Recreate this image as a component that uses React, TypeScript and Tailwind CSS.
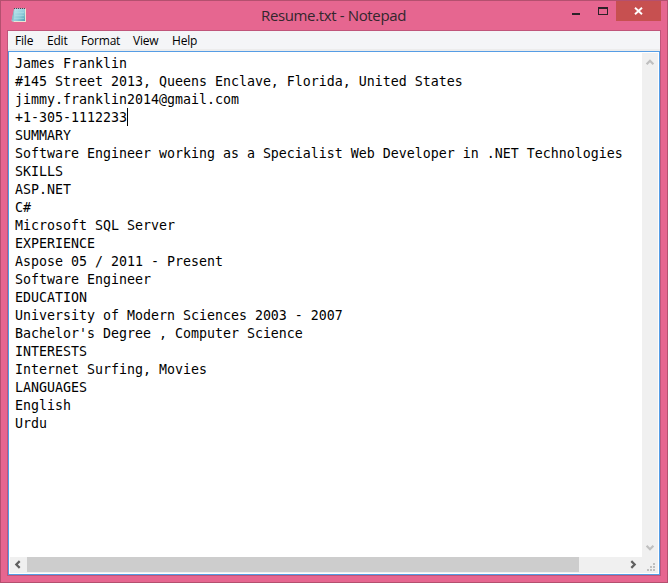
const lines = [
  'James Franklin',
  '#145 Street 2013, Queens Enclave, Florida, United States',
  'jimmy.franklin2014@gmail.com',
  '+1-305-1112233',
  'SUMMARY',
  'Software Engineer working as a Specialist Web Developer in .NET Technologies',
  'SKILLS',
  'ASP.NET',
  'C#',
  'Microsoft SQL Server',
  'EXPERIENCE',
  'Aspose 05 / 2011 - Present',
  'Software Engineer',
  'EDUCATION',
  'University of Modern Sciences 2003 - 2007',
  "Bachelor's Degree , Computer Science",
  'INTERESTS',
  'Internet Surfing, Movies',
  'LANGUAGES',
  'English',
  'Urdu',
];
const caretLine = 3;

function NotepadIcon() {
  return (
    <svg width="16" height="16" viewBox="0 0 16 16" className="shrink-0">
      <defs>
        <linearGradient id="page" x1="0" y1="0" x2="1" y2="1">
          <stop offset="0" stopColor="#c3e9f1" />
          <stop offset="0.6" stopColor="#8fcbd9" />
          <stop offset="1" stopColor="#4f9fb3" />
        </linearGradient>
      </defs>
      <path d="M3 2.5L0.5 14l2 1H15V2.5z" fill="#b3cdd3" />
      <path d="M3 2L0.7 13.5h3V2z" fill="#86b9c6" />
      <path d="M3.5 1.5H14V14H2.3z" fill="url(#page)" />
      <path d="M14 1.5h1V15H3v-1h11z" fill="#efe3d2" />
      <path d="M3 1.5H15" stroke="#3f5158" strokeWidth="1" strokeDasharray="1 1" />
      <path d="M4 5.5h9M4 8.5h9M3 11.5h10" stroke="#b4e0e8" strokeWidth="0.5" />
    </svg>
  );
}

type Direction = 'up' | 'down' | 'left' | 'right';

const arrows: Record<Direction, string> = {
  up: 'M0.6 6.2L4 2.8L7.4 6.2',
  down: 'M0.6 1.8L4 5.2L7.4 1.8',
  left: 'M5.7 0.1L2.3 3.5L5.7 6.9',
  right: 'M2.3 0.1L5.7 3.5L2.3 6.9',
};

function Arrow({ direction, color }: { direction: Direction; color: string }) {
  return (
    <svg width="8" height="8" viewBox="0 0 8 8" className="overflow-visible">
      <path d={arrows[direction]} fill="none" stroke={color} strokeWidth="2.2" />
    </svg>
  );
}

function TitleBar() {
  return (
    <div className="flex h-[29px] shrink-0">
      <div className="flex w-[164px] pt-[6px] pl-[10px]">
        <NotepadIcon />
      </div>
      <div className="flex-1 pt-[4px] pl-[96px] font-['Open_Sans',sans-serif] text-[15px] leading-[20px] tracking-[-0.36px] whitespace-nowrap text-[#33272d]">
        Resume.txt - Notepad
      </div>
      <div className="flex shrink-0 pr-[6px]">
        <svg width="54" height="20" viewBox="0 0 54 20" shapeRendering="crispEdges">
          <path d="M10 12h8v2h-8z" fill="#2b2228" />
          <path d="M36 6h10v8H36zM37 8v5h8V8z" fill="#2b2228" fillRule="evenodd" />
        </svg>
        <div className="flex h-[20px] w-[45px] items-center justify-center bg-[#c75050]">
          <svg width="9" height="8" viewBox="0 0 9 8">
            <path d="M1 0.8L8 7.2M8 0.8L1 7.2" stroke="#fff" strokeWidth="1.9" />
          </svg>
        </div>
      </div>
    </div>
  );
}

function MenuBar() {
  return (
    <div className="flex h-[20px] shrink-0 border-b-2 border-[#ececec] bg-[#f4f5f7] pl-[7px] font-['Open_Sans',sans-serif] text-[12px] leading-[20px] tracking-[-0.2px] text-black">
      <span className="w-[32px]">File</span>
      <span className="w-[34px]">Edit</span>
      <span className="w-[52px]">Format</span>
      <span className="w-[39px]">View</span>
      <span>Help</span>
    </div>
  );
}

function Editor() {
  return (
    <div className="flex flex-1 flex-col border border-[#569de5] bg-white p-px">
      <div className="flex flex-1">
        <div className="flex-1 pt-[2px] pl-[5px] font-['DejaVu_Sans_Mono',monospace] text-[13.29px] leading-[18px] whitespace-pre text-black">
          {lines.map((line, i) => (
            <div key={line + i} className="flex h-[18px]">
              <span>{line}</span>
              {i === caretLine && <span className="-mt-px h-[18px] w-px bg-black" />}
            </div>
          ))}
        </div>
        <div className="flex w-[16px] flex-col items-center justify-between bg-[#f0f0f0] pt-[5px] pb-[5px]">
          <Arrow direction="up" color="#bfbfbf" />
          <Arrow direction="down" color="#bfbfbf" />
        </div>
      </div>
      <div className="flex h-[16px] shrink-0 bg-[#f0f0f0]">
        <div className="flex w-[17px] items-center pl-[4px]">
          <Arrow direction="left" color="#606060" />
        </div>
        <div className="h-[15px] w-[552px] bg-[#cdcdcd]" />
        <div className="flex flex-1 items-center justify-end pr-[5px]">
          <Arrow direction="right" color="#606060" />
        </div>
        <svg width="16" height="16" viewBox="0 0 16 16" shapeRendering="crispEdges">
          <path d="M11 6h2v2h-2zM8 9h2v2H8zM11 9h2v2h-2zM5 12h2v2H5zM8 12h2v2H8zM11 12h2v2h-2z" fill="#bfbfbf" />
        </svg>
      </div>
    </div>
  );
}

export default function App() {
  return (
    <div className="flex h-[583px] w-[668px] flex-col overflow-hidden border border-[#b4506f] bg-[#e66690]">
      <TitleBar />
      <div className="mx-[6px] mb-[6px] flex flex-1 flex-col border border-[#c0557a]">
        <MenuBar />
        <Editor />
      </div>
    </div>
  );
}
